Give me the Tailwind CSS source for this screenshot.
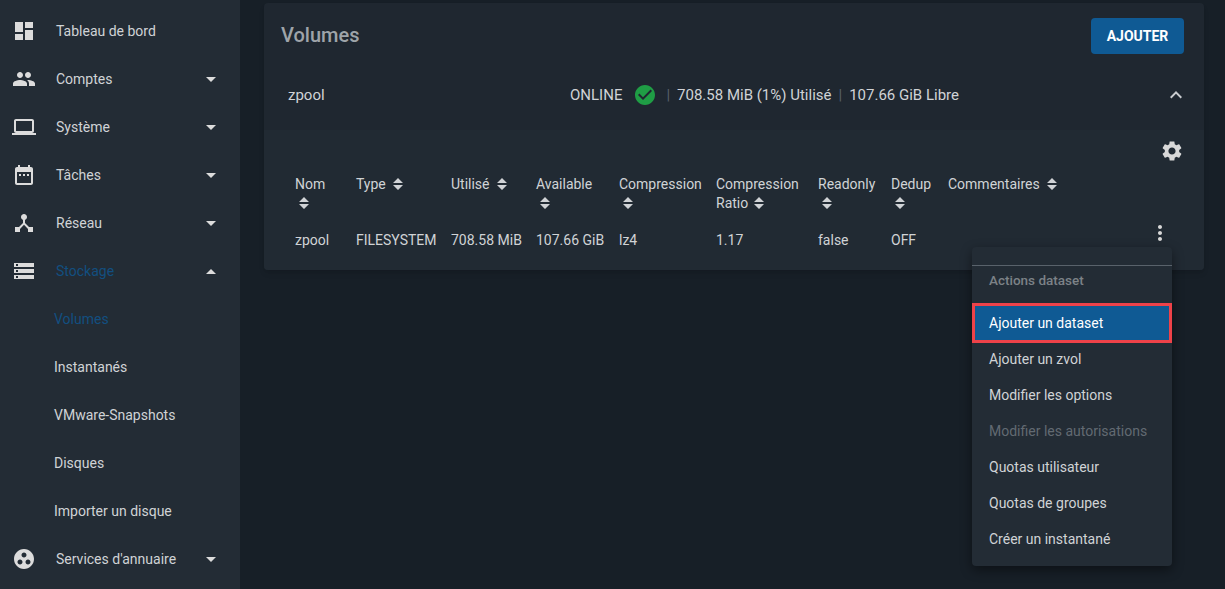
<!DOCTYPE html>
<html lang="fr">
<head>
  <meta charset="UTF-8" />
  <title>Volumes</title>
  <script src="https://cdn.jsdelivr.net/npm/@tailwindcss/browser@4"></script>
</head>
<body class="bg-[#171f27] font-['Roboto',sans-serif] text-[14px] text-[#d0d3d6] overflow-hidden">
<div class="relative flex w-[1225px] h-[589px] overflow-hidden">

  <!-- Sidebar -->
  <aside class="w-[240px] h-full shrink-0 bg-[#232c35] pt-[7px]">
    <div class="flex items-center h-12 pl-3">
      <svg class="w-6 h-6 fill-[#dcdcdc]" viewBox="0 0 24 24"><path d="M3 13h8V3H3v10zm0 8h8v-6H3v6zm10 0h8V11h-8v10zm0-18v6h8V3h-8z"/></svg>
      <span class="ml-5">Tableau de bord</span>
    </div>
    <div class="flex items-center h-12 pl-3">
      <svg class="w-6 h-6 fill-[#dcdcdc]" viewBox="0 0 24 24"><path d="M16 11c1.66 0 2.99-1.34 2.99-3S17.66 5 16 5c-1.66 0-3 1.34-3 3s1.34 3 3 3zm-8 0c1.66 0 2.99-1.34 2.99-3S9.66 5 8 5C6.34 5 5 6.34 5 8s1.34 3 3 3zm0 2c-2.33 0-7 1.17-7 3.5V19h14v-2.5c0-2.33-4.67-3.5-7-3.5zm8 0c-.29 0-.62.02-.97.05 1.16.84 1.97 1.97 1.97 3.45V19h6v-2.5c0-2.33-4.67-3.5-7-3.5z"/></svg>
      <span class="ml-5 flex-1">Comptes</span>
      <span class="mr-[24px] border-x-[5px] border-t-[5px] border-x-transparent border-t-[#dcdcdc]"></span>
    </div>
    <div class="flex items-center h-12 pl-3">
      <svg class="w-6 h-6 fill-[#dcdcdc]" viewBox="0 0 24 24"><path d="M20 18c1.1 0 1.99-.9 1.99-2L22 6c0-1.1-.9-2-2-2H4c-1.1 0-2 .9-2 2v10c0 1.1.9 2 2 2H0v2h24v-2h-4zM4 6h16v10H4V6z"/></svg>
      <span class="ml-5 flex-1">Système</span>
      <span class="mr-[24px] border-x-[5px] border-t-[5px] border-x-transparent border-t-[#dcdcdc]"></span>
    </div>
    <div class="flex items-center h-12 pl-3">
      <svg class="w-6 h-6 fill-[#dcdcdc]" viewBox="0 0 24 24"><path d="M9 11H7v2h2v-2zm4 0h-2v2h2v-2zm4 0h-2v2h2v-2zm2-7h-1V2h-2v2H8V2H6v2H5c-1.11 0-1.99.9-1.99 2L3 20c0 1.1.89 2 2 2h14c1.1 0 2-.9 2-2V6c0-1.1-.9-2-2-2zm0 16H5V9h14v11z"/></svg>
      <span class="ml-5 flex-1">Tâches</span>
      <span class="mr-[24px] border-x-[5px] border-t-[5px] border-x-transparent border-t-[#dcdcdc]"></span>
    </div>
    <div class="flex items-center h-12 pl-3">
      <svg class="w-6 h-6 fill-[#dcdcdc]" viewBox="0 0 24 24"><path d="M17 16l-4-4V8.82C14.16 8.4 15 7.3 15 6c0-1.66-1.34-3-3-3S9 4.34 9 6c0 1.3.84 2.4 2 2.82V12l-4 4H3v5h5v-3.05l4-4.2 4 4.2V21h5v-5h-4z"/></svg>
      <span class="ml-5 flex-1">Réseau</span>
      <span class="mr-[24px] border-x-[5px] border-t-[5px] border-x-transparent border-t-[#dcdcdc]"></span>
    </div>
    <div class="flex items-center h-12 pl-3">
      <svg class="w-6 h-6 fill-[#dcdcdc]" viewBox="0 0 24 24"><path d="M2 20h20v-4H2v4zm2-3h2v2H4v-2zM2 4v4h20V4H2zm4 3H4V5h2v2zm-4 7h20v-4H2v4zm2-3h2v2H4v-2z"/></svg>
      <span class="ml-5 flex-1 text-[#124f80]">Stockage</span>
      <span class="mr-[24px] border-x-[5px] border-b-[5px] border-x-transparent border-b-[#dcdcdc]"></span>
    </div>
    <div class="flex items-center h-12 pl-[54px] text-[#124f80]">Volumes</div>
    <div class="flex items-center h-12 pl-[54px]">Instantanés</div>
    <div class="flex items-center h-12 pl-[54px]">VMware-Snapshots</div>
    <div class="flex items-center h-12 pl-[54px]">Disques</div>
    <div class="flex items-center h-12 pl-[54px]">Importer un disque</div>
    <div class="flex items-center h-12 pl-3">
      <svg class="w-6 h-6 fill-[#dcdcdc]" viewBox="0 0 24 24"><path d="M12 2C6.48 2 2 6.48 2 12s4.48 10 10 10 10-4.48 10-10S17.52 2 12 2zM8 17.5c-1.38 0-2.5-1.12-2.5-2.5s1.12-2.5 2.5-2.5 2.5 1.12 2.5 2.5-1.12 2.5-2.5 2.5zM9.5 8c0-1.38 1.12-2.5 2.5-2.5s2.5 1.12 2.5 2.5-1.12 2.5-2.5 2.5S9.5 9.38 9.5 8zm6.5 9.5c-1.38 0-2.5-1.12-2.5-2.5s1.12-2.5 2.5-2.5 2.5 1.12 2.5 2.5-1.12 2.5-2.5 2.5z"/></svg>
      <span class="ml-5 flex-1">Services d'annuaire</span>
      <span class="mr-[24px] border-x-[5px] border-t-[5px] border-x-transparent border-t-[#dcdcdc]"></span>
    </div>
  </aside>

  <!-- Main -->
  <main class="flex-1 pl-6 pr-[21px] pt-[3px]">
    <section class="h-[267px] rounded-[4px] bg-[#1f2730] shadow-md overflow-hidden">
      <div class="flex items-center justify-between h-[66px] pl-[17px] pr-5">
        <h1 class="text-[20px] font-medium text-[#9ea4a9] -mt-[2px]">Volumes</h1>
        <button class="w-[93px] h-9 rounded-[4px] bg-[#0f5a94] text-[14px] font-bold text-white">AJOUTER</button>
      </div>

      <div class="flex items-center h-[61px] pb-[9px] pl-6 pr-4 text-[15px]">
        <span class="w-[282px]">zpool</span>
        <span>ONLINE</span>
        <svg class="w-6 h-6 ml-[11px] fill-[#1f9d45]" viewBox="0 0 24 24"><path d="M12 2C6.48 2 2 6.48 2 12s4.48 10 10 10 10-4.48 10-10S17.52 2 12 2zm-2 15l-5-5 1.41-1.41L10 14.17l7.59-7.59L19 8l-9 9z"/></svg>
        <span class="ml-[9px] text-[#59616a]">|</span>
        <span class="ml-[7px]">708.58 MiB (1%) Utilisé</span>
        <span class="ml-[7px] text-[#59616a]">|</span>
        <span class="ml-[7px] flex-1">107.66 GiB Libre</span>
        <svg class="w-6 h-6 fill-[#c8cbce]" viewBox="0 0 24 24"><path d="M12 8l-6 6 1.41 1.41L12 10.83l4.59 4.58L18 14z"/></svg>
      </div>

      <div class="h-[140px] bg-[#212a33] pl-[31px] pr-5">
        <div class="flex justify-end h-[45px] pt-[9px]">
          <svg class="w-6 h-6 fill-[#d8d8d8]" viewBox="0 0 24 24"><path d="M19.14 12.94c.04-.3.06-.61.06-.94 0-.32-.02-.64-.07-.94l2.03-1.58c.18-.14.23-.41.12-.61l-1.92-3.32c-.12-.22-.37-.29-.59-.22l-2.39.96c-.5-.38-1.03-.7-1.62-.94l-.36-2.54c-.04-.24-.24-.41-.48-.41h-3.84c-.24 0-.43.17-.47.41l-.36 2.54c-.59.24-1.13.57-1.62.94l-2.39-.96c-.22-.08-.47 0-.59.22L2.74 8.87c-.12.21-.08.47.12.61l2.03 1.58c-.05.3-.09.63-.09.94s.02.64.07.94l-2.03 1.58c-.18.14-.23.41-.12.61l1.92 3.32c.12.22.37.29.59.22l2.39-.96c.5.38 1.03.7 1.62.94l.36 2.54c.05.24.24.41.48.41h3.84c.24 0 .44-.17.47-.41l.36-2.54c.59-.24 1.13-.56 1.62-.94l2.39.96c.22.08.47 0 .59-.22l1.92-3.32c.12-.22.07-.47-.12-.61l-2.01-1.58zM12 15.6c-1.98 0-3.6-1.62-3.6-3.6s1.62-3.6 3.6-3.6 3.6 1.62 3.6 3.6-1.62 3.6-3.6 3.6z"/></svg>
        </div>

        <!-- Table -->
        <div class="grid grid-cols-[61px_95px_85px_83px_97px_102px_73px_57px_1fr] leading-[19px]">
          <div class="h-[56px]">Nom<br>
            <svg class="w-[10px] h-3 ml-[4px] mt-[3px] fill-[#d0d3d6]" viewBox="0 0 10 12"><path d="M5 0l5 5H0zM5 12L0 7h10z"/></svg>
          </div>
          <div>Type <svg class="inline w-[10px] h-3 ml-1 mb-[2px] fill-[#d0d3d6]" viewBox="0 0 10 12"><path d="M5 0l5 5H0zM5 12L0 7h10z"/></svg></div>
          <div>Utilisé <svg class="inline w-[10px] h-3 ml-1 mb-[2px] fill-[#d0d3d6]" viewBox="0 0 10 12"><path d="M5 0l5 5H0zM5 12L0 7h10z"/></svg></div>
          <div>Available<br>
            <svg class="w-[10px] h-3 ml-[4px] mt-[3px] fill-[#d0d3d6]" viewBox="0 0 10 12"><path d="M5 0l5 5H0zM5 12L0 7h10z"/></svg>
          </div>
          <div>Compression<br>
            <svg class="w-[10px] h-3 ml-[4px] mt-[3px] fill-[#d0d3d6]" viewBox="0 0 10 12"><path d="M5 0l5 5H0zM5 12L0 7h10z"/></svg>
          </div>
          <div>Compression<br>Ratio <svg class="inline w-[10px] h-3 ml-[2px] mb-[2px] fill-[#d0d3d6]" viewBox="0 0 10 12"><path d="M5 0l5 5H0zM5 12L0 7h10z"/></svg></div>
          <div>Readonly<br>
            <svg class="w-[10px] h-3 ml-[4px] mt-[3px] fill-[#d0d3d6]" viewBox="0 0 10 12"><path d="M5 0l5 5H0zM5 12L0 7h10z"/></svg>
          </div>
          <div>Dedup<br>
            <svg class="w-[10px] h-3 ml-[4px] mt-[3px] fill-[#d0d3d6]" viewBox="0 0 10 12"><path d="M5 0l5 5H0zM5 12L0 7h10z"/></svg>
          </div>
          <div>Commentaires <svg class="inline w-[10px] h-3 ml-1 mb-[2px] fill-[#d0d3d6]" viewBox="0 0 10 12"><path d="M5 0l5 5H0zM5 12L0 7h10z"/></svg></div>

          <div>zpool</div>
          <div>FILESYSTEM</div>
          <div>708.58 MiB</div>
          <div>107.66 GiB</div>
          <div>lz4</div>
          <div>1.17</div>
          <div>false</div>
          <div>OFF</div>
          <div class="relative">
            <svg class="absolute right-[12px] -top-[10px] w-6 h-6 fill-[#d8d8d8]" viewBox="0 0 24 24"><path d="M12 8c1.1 0 2-.9 2-2s-.9-2-2-2-2 .9-2 2 .9 2 2 2zm0 2c-1.1 0-2 .9-2 2s.9 2 2 2 2-.9 2-2-.9-2-2-2zm0 6c-1.1 0-2 .9-2 2s.9 2 2 2 2-.9 2-2-.9-2-2-2z"/></svg>
          </div>
        </div>
      </div>
    </section>
  </main>

  <!-- Actions menu -->
  <div class="absolute left-[972px] top-[247px] w-[200px] h-[319px] rounded-[4px] bg-[#232c35] shadow-[0_4px_12px_rgba(0,0,0,0.45)]">
    <div class="mt-[18px] mb-[9px] border-t border-[#59626b] h-[29px] flex items-center px-[17px] text-[13.5px] font-medium text-[#7c8287]">Actions dataset</div>
    <div class="relative flex items-center h-10 -mb-[2px] px-[14px] bg-[#0f5a94] border-[3px] border-[#ee4249] text-white">Ajouter un dataset</div>
    <div class="flex items-center h-9 px-[17px]">Ajouter un zvol</div>
    <div class="flex items-center h-9 px-[17px]">Modifier les options</div>
    <div class="flex items-center h-9 px-[17px] text-[#626a72]">Modifier les autorisations</div>
    <div class="flex items-center h-9 px-[17px]">Quotas utilisateur</div>
    <div class="flex items-center h-9 px-[17px]">Quotas de groupes</div>
    <div class="flex items-center h-9 px-[17px]">Créer un instantané</div>
  </div>
</div>
</body>
</html>
